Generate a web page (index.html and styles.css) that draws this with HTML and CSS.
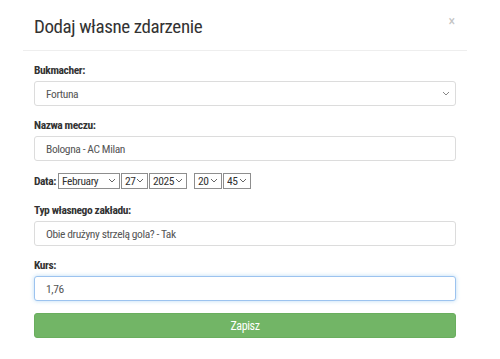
FILE: index.html
```html
<!DOCTYPE html>
<html lang="pl">
<head>
  <meta charset="UTF-8">
  <meta name="viewport" content="width=device-width, initial-scale=1.0">
  <title>Dodaj własne zdarzenie</title>
  <link rel="stylesheet" href="styles.css">
</head>
<body>
  <div class="modal">
    <div class="modal-header">
      <h4 class="modal-title">Dodaj własne zdarzenie</h4>
      <button class="close" type="button">&times;</button>
    </div>
    <form class="modal-body">
      <div class="form-group">
        <label class="label" for="bookie">Bukmacher:</label>
        <select id="bookie" class="form-control select">
          <option>Fortuna</option>
        </select>
      </div>
      <div class="form-group">
        <label class="label" for="match">Nazwa meczu:</label>
        <input id="match" class="form-control" type="text" value="Bologna - AC Milan">
      </div>
      <div class="date-row">
        <span class="label">Data:</span>
        <select class="small-select month"><option>February</option></select><select class="small-select day"><option>27</option></select><select class="small-select year"><option>2025</option></select>
        <span class="time">
          <select class="small-select hour"><option>20</option></select><select class="small-select minute"><option>45</option></select>
        </span>
      </div>
      <div class="form-group">
        <label class="label" for="bet">Typ własnego zakładu:</label>
        <input id="bet" class="form-control" type="text" value="Obie drużyny strzelą gola? - Tak">
      </div>
      <div class="form-group">
        <label class="label" for="odds">Kurs:</label>
        <input id="odds" class="form-control focused" type="text" value="1,76">
      </div>
      <button class="btn-save" type="button">Zapisz</button>
    </form>
  </div>
</body>
</html>
```

FILE: styles.css
```css
body {
  margin: 0;
  background-color: #fff;
  font-family: "Roboto Condensed", Roboto, sans-serif;
  font-stretch: condensed;
  color: #333;
}
.modal {
  width: 444px;
  margin-left: 23px;
}
.modal-header {
  display: flex;
  justify-content: space-between;
  align-items: flex-start;
  padding: 15px 11px 11px;
  border-bottom: 1px solid #eee;
}
.modal-title {
  margin: 0;
  font-size: 19px;
  line-height: 24px;
  letter-spacing: -0.4px;
  font-weight: 400;
  color: #333;
}
.close {
  border: none;
  background: none;
  padding: 0;
  margin: 0 1px 0 0;
  font-family: inherit;
  font-size: 14px;
  line-height: 12px;
  color: #c4c4c4;
}
.modal-body {
  display: block;
  padding: 12px 11px 20px;
}
.form-group {
  margin-bottom: 12px;
}
.label {
  display: block;
  margin-bottom: 4px;
  font-size: 11.5px;
  line-height: 14px;
  letter-spacing: -0.4px;
  font-weight: 700;
  color: #333;
}
.form-control {
  display: block;
  box-sizing: border-box;
  width: 100%;
  height: 25px;
  padding: 0 11px;
  font-family: inherit;
  font-stretch: condensed;
  font-size: 11.5px;
  letter-spacing: -0.4px;
  color: #555;
  background-color: #fff;
  border: 1px solid #dcdcdc;
  border-radius: 3px;
  outline: none;
}
.select {
  appearance: none;
  background-image: url("data:image/svg+xml,%3Csvg xmlns='http://www.w3.org/2000/svg' width='8' height='5' viewBox='0 0 8 5'%3E%3Cpath d='M1 1l3 3 3-3' fill='none' stroke='%23888' stroke-width='1'/%3E%3C/svg%3E");
  background-repeat: no-repeat;
  background-position: right 5px center;
}
.form-control.focused {
  border-color: #9cc3ef;
  box-shadow: 0 0 4px rgba(102, 175, 233, 0.45);
}
.date-row {
  display: flex;
  align-items: center;
  height: 15px;
  margin-bottom: 15px;
}
.date-row .label {
  display: inline;
  margin: 0 2px 0 0;
}
.small-select {
  appearance: none;
  box-sizing: border-box;
  height: 16px;
  margin: 0 1px 0 0;
  padding: 0 0 0 3px;
  font-family: inherit;
  font-stretch: condensed;
  font-size: 11.5px;
  letter-spacing: -0.4px;
  line-height: 14px;
  color: #333;
  background-color: #fff;
  background-image: url("data:image/svg+xml,%3Csvg xmlns='http://www.w3.org/2000/svg' width='8' height='5' viewBox='0 0 8 5'%3E%3Cpath d='M1 1l3 3 3-3' fill='none' stroke='%23666' stroke-width='1'/%3E%3C/svg%3E");
  background-repeat: no-repeat;
  background-position: right 3px center;
  border: 1px solid #8e8e8e;
  border-radius: 0;
}
.month { width: 62px; }
.day { width: 27px; }
.year { width: 38px; }
.hour { width: 28px; }
.minute { width: 28px; }
.time {
  display: flex;
  margin-left: 6px;
}
.btn-save {
  display: block;
  width: 100%;
  height: 25px;
  padding: 0;
  font-family: inherit;
  font-stretch: condensed;
  font-size: 12px;
  letter-spacing: -0.4px;
  color: #fff;
  background-color: #72b566;
  border: 1px solid #6aae5e;
  border-radius: 3px;
}
```
